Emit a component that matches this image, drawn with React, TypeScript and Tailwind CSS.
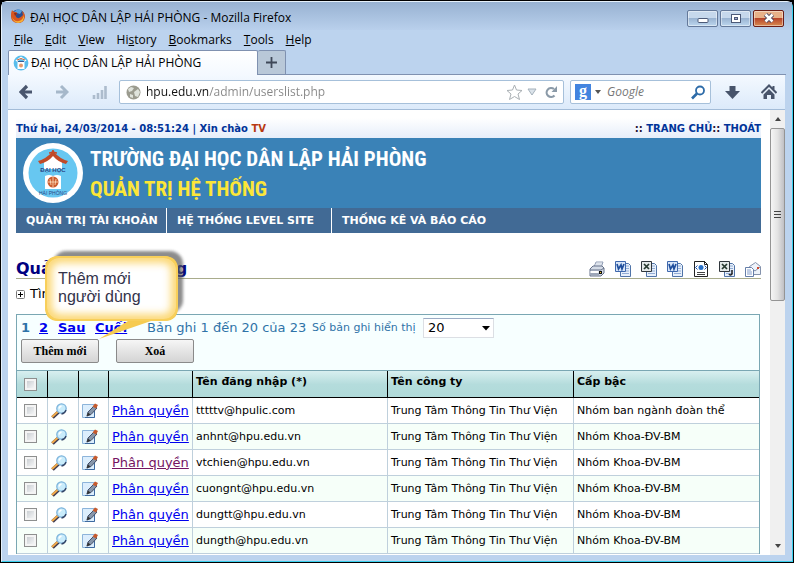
import type { ReactNode } from "react";

const UI = "font-['Open_Sans','Noto_Sans',sans-serif]";

type User = { login: string; level: string; visited?: boolean };

const users: User[] = [
  { login: "tttttv@hpulic.com", level: "Nhóm ban ngành đoàn thể" },
  { login: "anhnt@hpu.edu.vn", level: "Nhóm Khoa-ĐV-BM" },
  { login: "vtchien@hpu.edu.vn", level: "Nhóm Khoa-ĐV-BM", visited: true },
  { login: "cuongnt@hpu.edu.vn", level: "Nhóm Khoa-ĐV-BM" },
  { login: "dungtt@hpu.edu.vn", level: "Nhóm Khoa-ĐV-BM" },
  { login: "dungth@hpu.edu.vn", level: "Nhóm Khoa-ĐV-BM" },
];

const menus: [string, string, string][] = [
  ["", "F", "ile"],
  ["", "E", "dit"],
  ["", "V", "iew"],
  ["Hi", "s", "tory"],
  ["", "B", "ookmarks"],
  ["", "T", "ools"],
  ["", "H", "elp"],
];

function FirefoxIcon() {
  return (
    <svg className="size-4" viewBox="0 0 16 16" aria-hidden="true">
      <circle cx="8" cy="8" r="6.6" fill="#2b4c8f" />
      <path d="M4 4Q8-1 12 3L10 6 7 5Z" fill="#5aa0dc" />
      <path d="M2 2Q3 4 5 4 8 4 7 6 5 7 6 9 9 12 13 7L12 3Q15 5 15 9 14 15 8 15 1 15 1 8 1 4 2 2Z" fill="#d9561f" />
      <path d="M2 9Q4 14 9 13 13 12 14 7 15 14 8 15 3 14 2 9Z" fill="#f5b335" />
      <path d="M4 5Q7 4 7 6L5 8Z" fill="#8c2b1c" />
    </svg>
  );
}

function SchoolIcon() {
  return (
    <svg className="size-4" viewBox="0 0 16 16" aria-hidden="true">
      <circle cx="8" cy="8" r="7.4" fill="#58bdec" />
      <path d="M2.5 5.5 8 1.5l5.500 4-1 .8L8 4 3.500 6.500Z" fill="#fff" />
      <path d="M4 5Q8 2 12 5" stroke="#c8643c" fill="none" />
      <path d="M4.500 6h7v8h-7Z" fill="#fff" />
      <path d="M5 6.500h6" stroke="#345a94" />
      <circle cx="8" cy="10.500" r="2" fill="#e59a6a" />
    </svg>
  );
}

function SchoolLogo() {
  return (
    <svg className="size-[62px] shrink-0" viewBox="0 0 62 62" role="img" aria-label="Đại học Hải Phòng">
      <circle cx="31" cy="31" r="30" fill="#fff" />
      <circle cx="31" cy="31" r="24.500" fill="#67c7f1" />
      <path d="M22 20 31 12l9 8v7H22Z" fill="#fff" />
      <path d="M16 19Q24 17 31 9 38 17 46 19L44 22Q36 20 31 14 26 20 18 22Z" fill="#c04a28" />
      <path d="M27 11Q31 11 31 8 31 11 35 11" stroke="#c04a28" strokeWidth="1.500" fill="none" />
      <text x="31" y="30" textAnchor="middle" fontSize="6" fontWeight="bold" fill="#2b4686" fontFamily="Liberation Sans">ĐẠI HỌC</text>
      <path d="M23 34q4-2 8 0 4-2 8 0v13H23Z" fill="#fff" />
      <circle cx="31" cy="40" r="5.500" fill="#cb5b2c" />
      <path d="M31 35v10M28 37l1 6M34 37l-1 6M26 40h10" stroke="#ffe3c4" strokeWidth=".8" fill="none" />
      <text x="31" y="53" textAnchor="middle" fontSize="5" fill="#2b4686" fontFamily="Liberation Sans">HẢI PHÒNG</text>
    </svg>
  );
}

function WindowButton({ label, close, children }: { label: string; close?: boolean; children: ReactNode }) {
  return (
    <button
      type="button"
      aria-label={label}
      className={
        "flex h-[17px] w-[31px] items-center justify-center rounded-[2px] border shadow-[inset_0_0_0_1px_#ffffff70] " +
        (close
          ? "border-[#6b1d16] bg-[linear-gradient(#e8b088_0_45%,#b8452a_50%,#d88a50)]"
          : "border-[#64799a] bg-[linear-gradient(#c6d8ec_0_45%,#9ab4d2_50%,#bcd6ee)]")
      }
    >
      {children}
    </button>
  );
}

function TitleBar() {
  return (
    <header className="flex h-7 items-center gap-1 bg-linear-to-b from-[#98b2d2] to-[#b9d0ec] pr-2 pl-2">
      <FirefoxIcon />
      <h1 className="mt-1 flex-1 truncate text-xs leading-4">ĐẠI HỌC DÂN LẬP HẢI PHÒNG - Mozilla Firefox</h1>
      <div className="mt-1 flex gap-[2px]">
        <WindowButton label="Minimize">
          <svg className="h-3 w-4" viewBox="0 0 16 12" aria-hidden="true">
            <rect x="3" y="6.500" width="10" height="4" rx="1" fill="#fff" stroke="#4c5a78" />
          </svg>
        </WindowButton>
        <WindowButton label="Maximize">
          <svg className="h-3 w-4" viewBox="0 0 16 12" aria-hidden="true">
            <rect x="3.500" y="2.500" width="9" height="8" fill="#fff" stroke="#4c5a78" />
            <rect x="6.500" y="5.500" width="3" height="2" fill="#aac" stroke="#4c5a78" />
          </svg>
        </WindowButton>
        <WindowButton label="Close" close>
          <svg className="h-3 w-4" viewBox="0 0 16 12" aria-hidden="true">
            <path d="m4.500 2.500 7 7m0-7-7 7" stroke="#4c4660" strokeWidth="4.500" />
            <path d="m4.500 2.500 7 7m0-7-7 7" stroke="#fff" strokeWidth="2.500" />
          </svg>
        </WindowButton>
      </div>
    </header>
  );
}

function NavigationBar() {
  return (
    <div className="flex h-[35px] shrink-0 items-center border-b border-[#a3bcd8] bg-linear-to-b from-[#f4f9ff] to-[#dceafa] pr-2 pl-[11px]">
      <button type="button" aria-label="Back" className="mr-[22px]">
        <svg className="h-4 w-[14px]" viewBox="0 0 14 16" aria-hidden="true">
          <path d="M8 2 2 8l6 6M2 8h11" stroke="#4a566e" strokeWidth="3.200" fill="none" />
        </svg>
      </button>
      <button type="button" aria-label="Forward" className="mr-[23px]">
        <svg className="h-4 w-[14px]" viewBox="0 0 14 16" aria-hidden="true">
          <path d="m6 2 6 6-6 6M12 8H1" stroke="#a6b8ca" strokeWidth="3" fill="none" />
        </svg>
      </button>
      <svg className="mr-3 h-4 w-[15px]" viewBox="0 0 15 16" aria-hidden="true">
        <path d="M2 15v-4M6 15V9M10 15V6M13.500 15V2" stroke="#adbccd" strokeWidth="2.600" />
      </svg>
      <div className="flex h-6 flex-1 items-center rounded-[2px] border border-[#a6c0da] bg-white pr-[5px] pl-[6px]">
        <svg className="size-[15px] shrink-0" viewBox="0 0 15 15" aria-hidden="true">
          <circle cx="7.500" cy="7.500" r="7" fill="#9b9b8f" />
          <path d="M2 4 5 2 8 3 6 6 3 7ZM8 7l4-3 2 3-2 5-3-1ZM4 9l3 1v3L4 12Z" fill="#dfe3dc" />
        </svg>
        <input
          aria-label="Address"
          defaultValue="hpu.edu.vn/admin/userslist.php"
          className="ml-[5px] min-w-0 flex-1 bg-[linear-gradient(to_right,#111_63px,#868686_63px)] bg-clip-text text-xs leading-5 text-transparent outline-none"
        />
        <svg className="mr-1 size-[17px]" viewBox="0 0 17 17" aria-hidden="true">
          <path d="m8.500 1 2 5 5.500.500-4 3.500 1.500 5.500-5-3-5 3L5 10 1 6.500 6.500 6Z" fill="#fff" stroke="#aab0b4" />
        </svg>
        <svg className="mr-2 h-2 w-[10px]" viewBox="0 0 10 8" aria-hidden="true">
          <path d="M1 1h8L5 7Z" fill="#dbe3ea" stroke="#a5b1bb" />
        </svg>
        <button type="button" aria-label="Reload">
          <svg className="size-[13px]" viewBox="0 0 13 13" aria-hidden="true">
            <path d="M9.500 9.500A4.500 4.500 0 1 1 9 3" stroke="#8b9aa8" strokeWidth="2.200" fill="none" />
            <path d="M12 0v6H6.500Z" fill="#8b9aa8" />
          </svg>
        </button>
      </div>
      <div className="ml-[6px] flex h-6 w-[141px] items-center rounded-[2px] border border-[#a6c0da] bg-white px-1">
        <span className="flex size-4 shrink-0 items-center justify-center bg-[#4384df] pb-[2px] font-['Liberation_Serif',serif] text-base leading-4 font-bold text-white">g</span>
        <svg className="ml-1 h-1 w-[6px]" viewBox="0 0 6 4" aria-hidden="true">
          <path d="M0 0h6L3 4Z" fill="#555" />
        </svg>
        <input
          aria-label="Search"
          placeholder="Google"
          className="ml-[6px] min-w-0 flex-1 text-xs leading-5 italic outline-none placeholder:text-[#777]"
        />
        <button type="button" aria-label="Search Google">
          <svg className="size-[15px]" viewBox="0 0 15 15" aria-hidden="true">
            <circle cx="9" cy="5.500" r="4" stroke="#2d6ba8" strokeWidth="1.800" fill="none" />
            <path d="m6 8.500-5 5" stroke="#2d6ba8" strokeWidth="2.600" />
          </svg>
        </button>
      </div>
      <button type="button" aria-label="Downloads" className="mr-[21px] ml-[14px]">
        <svg className="size-[15px]" viewBox="0 0 15 15" aria-hidden="true">
          <path d="M4.500 1h6v5H15l-7.500 8L0 6h4.500Z" fill="#48546b" />
        </svg>
      </button>
      <button type="button" aria-label="Home">
        <svg className="size-4" viewBox="0 0 16 16" aria-hidden="true">
          <path d="M.5 9 8 1.500 15.500 9M12.500 2v4" stroke="#48546b" strokeWidth="2" fill="none" />
          <path d="m8 5 5.500 5.500V15H10v-4H6v4H2.500v-4.500Z" fill="#48546b" />
        </svg>
      </button>
    </div>
  );
}

function PrinterIcon() {
  return (
    <svg className="size-4" viewBox="0 0 16 16" aria-hidden="true">
      <path d="m5 6 2-5h7l-2 6Z" fill="#fff" stroke="#8f9cb4" />
      <path d="m7 3 6 0M6 5h6" stroke="#9fb0c8" strokeWidth=".7" />
      <path d="m1 8 3-3h9l2 2v5l-3 3H1Z" fill="#d4dbe6" stroke="#66728a" />
      <path d="M1 9h11l3-2M2 13h8" stroke="#66728a" fill="none" />
      <path d="M1.500 10h8v2h-8Z" fill="#fff" />
      <path d="M10 10h3v3h-3Z" fill="#111" />
      <path d="M11 11h1v1h-1Z" fill="#f4cd35" />
    </svg>
  );
}

function OfficeIcon({ kind }: { kind: "word" | "excel" | "csv" }) {
  const word = kind === "word";
  return (
    <svg className="size-4" viewBox="0 0 16 16" aria-hidden="true">
      <path d="M5.500 2.500h8l2 2v11h-10Z" fill="#e8f0fb" stroke="#5074a8" />
      <path d="M11 5h3M11 7.500h3M7 10h7M7 12.500h7" stroke="#7c9ccc" strokeWidth=".8" />
      <path d="M.5.500h10v10H.5Z" fill={word ? "#d8e6f9" : "#e5eaea"} stroke={word ? "#3f68ad" : "#30363c"} />
      {word ? (
        <path d="m2 3 1.500 5L6 4l1 4 2-5" stroke="#204f9d" strokeWidth="1.700" fill="none" />
      ) : (
        <path d="m3 3 5 5M8 3 3 8" stroke="#26382f" strokeWidth="1.700" />
      )}
      {kind === "csv" && <path d="M13 9v4q-2 2-3 0" stroke="#222" strokeWidth="1.500" fill="none" />}
    </svg>
  );
}

function XmlIcon() {
  return (
    <svg className="size-4" viewBox="0 0 16 16" aria-hidden="true">
      <path d="M1.500.500h10l3 3v12h-13Z" fill="#fff" stroke="#222" />
      <path d="M11.500 0v3.500h3" fill="none" stroke="#222" />
      <path d="m4.500 4.500-2 2 2 2m7-4 2 2-2 2" stroke="#1c4eaa" fill="none" />
      <circle cx="8" cy="6.500" r="2.500" fill="#2770c8" />
      <path d="M4 11.500h8M4 13.500h8" stroke="#444" />
    </svg>
  );
}

function MailIcon() {
  return (
    <svg className="size-4" viewBox="0 0 16 16" aria-hidden="true">
      <path d="m4.500 5.500 6-4 5 4v8h-11Z" fill="#eef3fa" stroke="#8492ac" />
      <path d="m5 6 5 4 5-4" stroke="#8492ac" fill="none" />
      <path d="M12 6h2v2h-2Z" fill="#cf4a31" />
      <path d="M.500 6.500h6l2 2v7h-8Z" fill="#fff" stroke="#657ea9" />
      <path d="M2 9h4M2 11h5M2 13h5" stroke="#819ccb" />
    </svg>
  );
}

function ViewIcon() {
  return (
    <svg className="size-4" viewBox="0 0 16 16" aria-hidden="true">
      <path d="m7.500 9-6 5.500" stroke="#3e3b52" strokeWidth="3.600" />
      <path d="m7 8.500-6 5.500" stroke="#f0a94a" strokeWidth="2.200" />
      <circle cx="10.500" cy="5.500" r="4.700" fill="#c9ecfb" stroke="#7db4dc" strokeWidth="1.300" />
      <path d="M8 5.500q.500-2 2.500-2.500" stroke="#fff" strokeWidth="1.500" fill="none" />
      <path d="M15 7q-1 3.500-4.500 4" stroke="#354668" strokeWidth="1.300" fill="none" />
    </svg>
  );
}

function EditIcon() {
  return (
    <svg className="size-4" viewBox="0 0 16 16" aria-hidden="true">
      <path d="M.500 1.500h12v13H.500Z" fill="#dceefd" stroke="#8db4da" />
      <path d="M12.500 5v9.500H3" stroke="#3e6aa0" fill="none" />
      <path d="m5 13 1-4 6-6 3 2-6 6.500Z" fill="#8796aa" stroke="#42506a" />
      <path d="m4.500 13.500 1.500-4 2.500 2Z" fill="#333" />
      <path d="m10.500 3.500 2.500-3L16 2l-2 3.500Z" fill="#c55a2d" />
    </svg>
  );
}

function Callout() {
  return (
    <div className="absolute top-[145px] left-[36px] h-[86px] w-[142px]">
      <svg className="absolute inset-0 size-full overflow-visible" viewBox="0 0 142 86" aria-hidden="true">
        <defs>
          <clipPath id="bubble">
            <rect x="2" y="2" width="131" height="63" rx="13" />
          </clipPath>
          <filter id="soft" x="-10%" y="-20%" width="120%" height="140%">
            <feGaussianBlur stdDeviation="1.500" />
          </filter>
          <filter id="glow" x="-20%" y="-30%" width="140%" height="160%">
            <feGaussianBlur stdDeviation="4" />
          </filter>
        </defs>
        <rect x="9" y="-4" width="130" height="62" rx="13" fill="#5c5c5c" opacity=".7" filter="url(#soft)" />
        <path d="M15 1H120Q134 1 134 15V52Q134 66 120 66H107L55 84 84 66H15Q1 66 1 52V15Q1 1 15 1Z" fill="#f6cb50" />
        <rect x="3" y="3" width="129" height="61" rx="12" fill="#fff" />
        <g clipPath="url(#bubble)">
          <rect x="2" y="2" width="131" height="63" rx="13" fill="none" stroke="#fbd468" strokeWidth="11" filter="url(#glow)" />
        </g>
        <rect x="2" y="2" width="131" height="63" rx="13" fill="none" stroke="#f8cf5a" strokeWidth="2" />
      </svg>
      <p className="relative pt-[15px] pl-[14px] font-['Liberation_Sans',sans-serif] text-base leading-[18px] text-[#33334a]">
        Thêm mới
        <br />
        người dùng
      </p>
    </div>
  );
}

function CheckBox({ label }: { label: string }) {
  return (
    <input
      type="checkbox"
      aria-label={label}
      className="ml-[7px] block size-[13px] appearance-none border border-[#8e8f8f] bg-linear-to-br from-[#c0c5ca] to-white shadow-[inset_0_0_0_2px_#f4f4f4]"
    />
  );
}

function UserTable() {
  const head = "border-r border-b border-black";
  const cell = "border-r border-b border-[#bfd0dc]";
  return (
    <table className="w-full table-fixed border-separate border-spacing-0 text-[11px]">
      <colgroup>
        <col className="w-[31px]" />
        <col className="w-[31px]" />
        <col className="w-[30px]" />
        <col className="w-[84px]" />
        <col className="w-[195px]" />
        <col className="w-[186px]" />
        <col />
      </colgroup>
      <thead>
        <tr className="h-[27px] bg-linear-to-b from-[#d8eff0] via-[#b4dcdc] to-[#b0dad9] text-left">
          <th className={head}><CheckBox label="Chọn tất cả" /></th>
          <th className={head} />
          <th className={head} />
          <th className={head} />
          <th className={head + " pb-1 pl-[3px]"}>Tên đăng nhập (*)</th>
          <th className={head + " pb-1 pl-[3px]"}>Tên công ty</th>
          <th className="border-b border-black pb-1 pl-[3px]">Cấp bậc</th>
        </tr>
      </thead>
      <tbody>
        {users.map((user) => (
          <tr key={user.login} className="h-[26px] even:bg-[#f6fff9]">
            <td className={cell}><CheckBox label={user.login} /></td>
            <td className={cell}>
              <button type="button" aria-label="Xem" className="ml-[3px] block"><ViewIcon /></button>
            </td>
            <td className={cell}>
              <button type="button" aria-label="Sửa" className="ml-[3px] block"><EditIcon /></button>
            </td>
            <td className={cell + " pl-[3px] text-[13px] whitespace-nowrap"}>
              <a href="#quyen" className={"underline " + (user.visited ? "text-[#751463]" : "text-[#0000ee]")}>Phân quyền</a>
            </td>
            <td className={cell + " pt-px pl-[3px]"}>{user.login}</td>
            <td className={cell + " pt-px pl-[3px] whitespace-nowrap"}>Trung Tâm Thông Tin Thư Viện</td>
            <td className="border-b border-[#bfd0dc] pt-px pl-[3px]">{user.level}</td>
          </tr>
        ))}
      </tbody>
    </table>
  );
}

function Page() {
  const action =
    "h-6 w-[78px] rounded-[2px] border border-[#8a8a8a] bg-linear-to-b from-[#f6f6f6] to-[#d4d4d4] font-['Liberation_Serif',serif] text-xs font-bold";
  return (
    <main className="relative min-w-0 flex-1 overflow-hidden pr-[9px] pl-2 font-['DejaVu_Sans',Verdana,sans-serif] text-black">
      <div className="mt-2 flex h-5 items-center justify-between bg-linear-to-b from-white to-[#e6eefa] text-[10px] font-bold whitespace-nowrap text-[#003399]">
        <p>Thứ hai, 24/03/2014 - 08:51:24 | Xin chào <span className="text-[#b83a12]">TV</span></p>
        <p>
          <span className="text-[#221133]">:: </span><a href="#home">TRANG CHỦ</a>
          <span className="text-[#221133]">:: </span><a href="#logout">THOÁT</a>
        </p>
      </div>
      <div className="flex h-[70px] items-center gap-[6px] bg-[#3a82b7] pl-[6px]">
        <SchoolLogo />
        <div className="pt-[2px] font-['Roboto_Condensed','Open_Sans_Condensed',Roboto,sans-serif] text-[21px] leading-[30px] font-bold whitespace-nowrap text-white">
          <p>TRƯỜNG ĐẠI HỌC DÂN LẬP HẢI PHÒNG</p>
          <p className="text-[#fce638]">QUẢN TRỊ HỆ THỐNG</p>
        </div>
      </div>
      <nav className="flex h-[25px] bg-[#416a95] text-[11px] leading-[25px] font-bold whitespace-nowrap text-white">
        <a href="#account" className="w-[151px] border-r border-white pl-[10px]">QUẢN TRỊ TÀI KHOẢN</a>
        <a href="#level" className="w-[165px] border-r border-white pl-[10px]">HỆ THỐNG LEVEL SITE</a>
        <a href="#report" className="pl-[10px]">THỐNG KÊ VÀ BÁO CÁO</a>
      </nav>
      <div className="mt-[26px] flex h-5 items-center justify-between border-b border-[#a9ac8c]">
        <h2 className="text-base leading-5 font-bold text-[#000080]">Quản lí người dùng</h2>
        <div className="flex gap-[10px]">
          <a href="#print" aria-label="In"><PrinterIcon /></a>
          <a href="#word" aria-label="Word"><OfficeIcon kind="word" /></a>
          <a href="#excel" aria-label="Excel"><OfficeIcon kind="excel" /></a>
          <a href="#doc" aria-label="Tài liệu"><OfficeIcon kind="word" /></a>
          <a href="#xml" aria-label="XML"><XmlIcon /></a>
          <a href="#csv" aria-label="CSV"><OfficeIcon kind="csv" /></a>
          <a href="#mail" aria-label="Thư"><MailIcon /></a>
        </div>
      </div>
      <div className="mt-[5px] flex h-5 items-center gap-[5px] text-[13px]">
        <svg className="size-[9px]" viewBox="0 0 9 9" aria-hidden="true">
          <rect x=".5" y=".5" width="8" height="8" rx="1" fill="#fff" stroke="#7a7a7a" />
          <path d="M2 4.500h5M4.500 2v5" stroke="#000" />
        </svg>
        <span>Tìm kiếm</span>
      </div>
      <section className="mt-[10px] mr-px border-x border-t border-[#7aa7b3]">
        <div className="h-[56px] border-b border-[#7aa7b3] bg-[#f7ffff] pl-1">
          <div className="flex h-6 items-center pt-[2px] text-[13px] whitespace-nowrap text-[#2f73a8]">
            <b className="w-[18px]">1</b>
            <a href="#p2" className="w-[19px] font-bold text-[#0000ee] underline">2</a>
            <a href="#next" className="w-[37px] font-bold text-[#0000ee] underline">Sau</a>
            <a href="#last" className="w-[52px] font-bold text-[#0000ee] underline">Cuối</a>
            <span className="w-[165px]">Bản ghi 1 đến 20 của 23</span>
            <label htmlFor="size" className="w-[111px] text-[11px]">Số bản ghi hiển thị</label>
            <div className="relative">
              <select id="size" className="block h-5 w-[71px] appearance-none border border-[#dcdfe4] border-t-[#9aabc4] bg-white pl-1 text-[13px] leading-4 text-black">
                <option>20</option>
                <option>50</option>
              </select>
              <svg className="pointer-events-none absolute top-2 right-1 h-[5px] w-2" viewBox="0 0 8 5" aria-hidden="true">
                <path d="M0 0h8L4 4.500Z" fill="#000" />
              </svg>
            </div>
          </div>
          <div className="flex gap-[17px]">
            <button type="button" className={action}>Thêm mới</button>
            <button type="button" className={action}>Xoá</button>
          </div>
        </div>
        <UserTable />
      </section>
      <Callout />
    </main>
  );
}

function ScrollBar() {
  return (
    <div className="flex w-[15px] shrink-0 flex-col items-center bg-[#f0f0f0] py-[6px]">
      <svg className="h-[5px] w-2 shrink-0" viewBox="0 0 8 5" aria-hidden="true">
        <path d="M1 5 4 1l3 4Z" fill="#444" />
      </svg>
      <div className="mt-[7px] flex h-2/5 w-full flex-col items-center justify-center gap-[2px] rounded-[2px] border border-[#949494] bg-linear-to-r from-[#f5f5f5] via-[#e3e3e3] to-[#c0c0c4]">
        <i className="h-px w-[7px] bg-[#444]" />
        <i className="h-px w-[7px] bg-[#444]" />
        <i className="h-px w-[7px] bg-[#444]" />
      </div>
      <svg className="mt-auto h-[5px] w-2 shrink-0" viewBox="0 0 8 5" aria-hidden="true">
        <path d="M1 0h6L4 4Z" fill="#444" />
      </svg>
    </div>
  );
}

export default function App() {
  return (
    <div className={"h-screen bg-black p-px " + UI}>
      <div className="flex h-full flex-col rounded-t-[6px] border border-[#e6f1fb] border-r-[#39d0ee] border-b-[#39d0ee] bg-[#bcd3ee] text-black">
        <TitleBar />
        <nav className="ml-3 flex h-5 shrink-0 items-center gap-3 text-xs">
          {menus.map(([before, key, after]) => (
            <button type="button" key={key + after}>
              {before}<u>{key}</u>{after}
            </button>
          ))}
        </nav>
        <div className="mx-[6px] flex h-[25px] shrink-0 items-stretch border-b border-[#7f91b0]">
          <div className="-mb-px flex w-[250px] items-center gap-[2px] rounded-t-[2px] border-x border-t border-[#7f91b0] bg-linear-to-b from-white to-[#f4f9ff] pl-1 text-xs">
            <SchoolIcon />
            <span>ĐẠI HỌC DÂN LẬP HẢI PHÒNG</span>
          </div>
          <button type="button" aria-label="New tab" className="flex w-7 items-center justify-center rounded-t-[2px] border-t border-r border-[#7f91b0] bg-[#b9c8d8]">
            <svg className="size-[11px]" viewBox="0 0 11 11" aria-hidden="true">
              <path d="M5.500 0v11M0 5.500h11" stroke="#3f4858" strokeWidth="1.800" />
            </svg>
          </button>
        </div>
        <div className="mr-[7px] mb-[6px] ml-[6px] flex min-h-0 flex-1 flex-col bg-white">
          <NavigationBar />
          <div className="flex min-h-0 flex-1">
            <Page />
            <ScrollBar />
          </div>
        </div>
      </div>
    </div>
  );
}
